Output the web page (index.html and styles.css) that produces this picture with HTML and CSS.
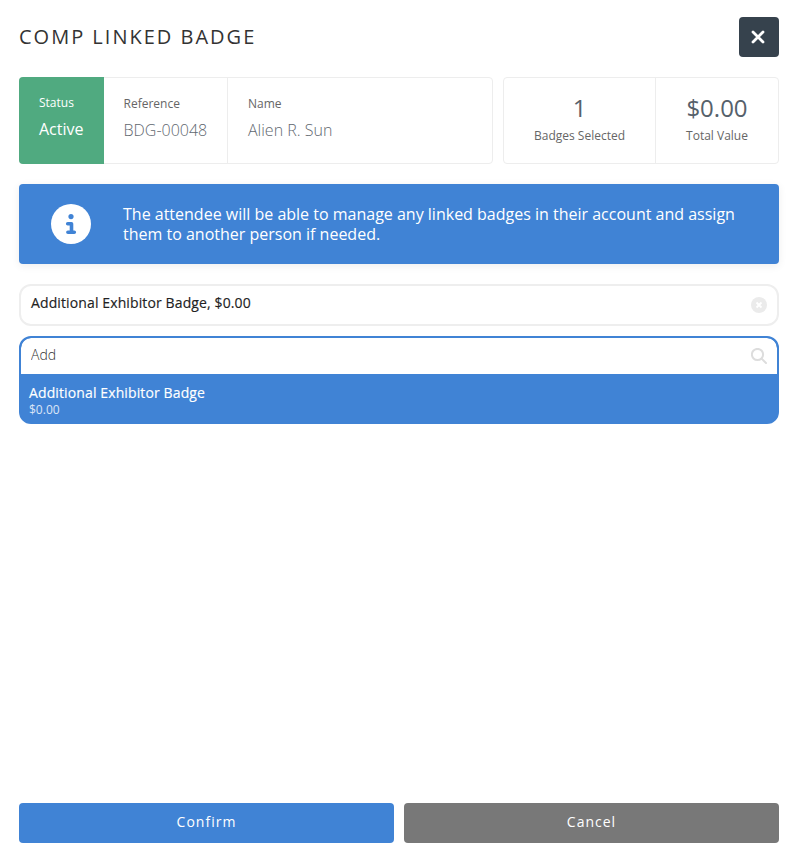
FILE: index.html
```html
<!DOCTYPE html>
<html lang="en">
<head>
    <meta charset="UTF-8">
    <meta name="viewport" content="width=device-width, initial-scale=1.0">
    <title>Comp Linked Badge</title>
    <link rel="stylesheet" href="styles.css">
</head>
<body>
    <div class="modal">
        <header class="modal-header">
            <h1>Comp Linked Badge</h1>
            <button class="close-button" aria-label="Close">
                <svg width="14" height="14" viewBox="0 0 14 14"><path d="M2 2L12 12M12 2L2 12"/></svg>
            </button>
        </header>

        <div class="summary">
            <div class="card details">
                <div class="cell status">
                    <span class="label">Status</span>
                    <span class="value">Active</span>
                </div>
                <div class="cell reference">
                    <span class="label">Reference</span>
                    <span class="value">BDG-00048</span>
                </div>
                <div class="cell name">
                    <span class="label">Name</span>
                    <span class="value">Alien R. Sun</span>
                </div>
            </div>
            <div class="card totals">
                <div class="total selected">
                    <span class="number">1</span>
                    <span class="label">Badges Selected</span>
                </div>
                <div class="total">
                    <span class="number">$0.00</span>
                    <span class="label">Total Value</span>
                </div>
            </div>
        </div>

        <div class="notice">
            <svg class="notice-icon" width="40" height="40" viewBox="0 0 40 40">
                <circle class="disc" cx="20" cy="20" r="20"/>
                <circle class="dot" cx="20" cy="12.6" r="2.6"/>
                <path d="M16.7 19.7H20.5V28.3M16.9 28.3H23.3"/>
            </svg>
            <p>The attendee will be able to manage any linked badges in their account and assign them to another person if needed.</p>
        </div>

        <div class="selected-badge">
            <span>Additional Exhibitor Badge, $0.00</span>
            <button class="remove-button" aria-label="Remove">
                <svg width="16" height="16" viewBox="0 0 16 16"><circle cx="8" cy="8" r="8"/><path d="M5.5 5.5L10.5 10.5M10.5 5.5L5.5 10.5"/></svg>
            </button>
        </div>

        <div class="search">
            <div class="search-field">
                <input type="text" value="Add" aria-label="Search badges">
                <svg width="16" height="16" viewBox="0 0 16 16"><circle cx="6.5" cy="6.5" r="5.6"/><path d="M10.6 10.6L15 15"/></svg>
            </div>
            <div class="search-option">
                <span class="option-name">Additional Exhibitor Badge</span>
                <span class="option-price">$0.00</span>
            </div>
        </div>

        <footer class="actions">
            <button class="confirm-button">Confirm</button>
            <button class="cancel-button">Cancel</button>
        </footer>
    </div>
</body>
</html>
```
FILE: styles.css
```css
* {
    box-sizing: border-box;
}
body {
    margin: 0;
    font-family: "Open Sans", sans-serif;
    background-color: white;
    color: #333;
}
button {
    font-family: inherit;
    border: none;
    padding: 0;
    cursor: pointer;
}
svg {
    display: block;
}
.modal {
    display: flex;
    flex-direction: column;
    min-height: 862px;
    padding: 17px 15px 19px 19px;
}
.modal-header {
    display: flex;
    justify-content: space-between;
    height: 40px;
    margin-bottom: 20px;
}
h1 {
    margin: 0;
    font-size: 20px;
    font-weight: 400;
    line-height: 40px;
    letter-spacing: 2px;
    text-transform: uppercase;
}
.close-button {
    display: flex;
    align-items: center;
    justify-content: center;
    width: 40px;
    height: 40px;
    padding-right: 2px;
    background-color: #36424d;
    border-radius: 4px;
}
.close-button path {
    stroke: white;
    stroke-width: 2.8;
    stroke-linecap: round;
}
.summary {
    display: flex;
    gap: 10px;
    height: 87px;
    margin-bottom: 20px;
}
.card {
    display: flex;
    border: 1px solid #ededed;
    border-radius: 4px;
}
.details {
    flex: 1;
}
.totals {
    width: 276px;
}
.cell {
    padding-top: 17px;
}
.label {
    display: block;
    font-size: 12px;
    line-height: 18px;
    color: #666;
}
.value {
    display: block;
    margin-top: 5px;
    font-size: 16px;
    font-weight: 300;
    line-height: 24px;
    color: #5f6870;
}
.status {
    width: 85px;
    margin: -1px 0 -1px -1px;
    padding: 17px 0 0 20px;
    background-color: #50aa80;
    border-radius: 4px 0 0 4px;
}
.status .label,
.status .value {
    color: white;
}
.status .value {
    font-weight: 400;
}
.reference {
    width: 124px;
    padding-left: 19.5px;
    border-right: 1px solid #ededed;
}
.name {
    padding-left: 20px;
}
.total {
    flex: 1;
    padding-top: 13px;
    text-align: center;
}
.selected {
    flex: none;
    width: 152px;
    border-right: 1px solid #ededed;
}
.number {
    display: block;
    margin-bottom: 2px;
    font-size: 24px;
    line-height: 34px;
    color: #56616b;
}
.notice {
    display: flex;
    align-items: center;
    height: 80px;
    margin-bottom: 20px;
    padding: 0 32px;
    background-color: #4083d5;
    border-radius: 4px;
    box-shadow: 0 2px 8px rgba(0,0,0,0.07);
    color: white;
}
.notice-icon {
    flex: none;
    margin-right: 32px;
}
.notice-icon .disc {
    fill: white;
}
.notice-icon .dot {
    fill: #4083d5;
}
.notice-icon path {
    fill: none;
    stroke: #4083d5;
    stroke-width: 3.6;
    stroke-linecap: round;
    stroke-linejoin: round;
}
.notice p {
    margin: 0;
    font-size: 16px;
    line-height: 20px;
}
.selected-badge {
    display: flex;
    justify-content: space-between;
    height: 42px;
    margin-bottom: 10px;
    padding: 0 10px;
    border: 2px solid #eee;
    border-radius: 12px;
    font-size: 14px;
    line-height: 34px;
    letter-spacing: 0.12px;
    -webkit-text-stroke: 0.15px;
    color: #222;
}
.remove-button {
    align-self: center;
    background: none;
}
.remove-button circle {
    fill: #ebebeb;
}
.remove-button path {
    stroke: white;
    stroke-width: 1.8;
}
.search {
    height: 88px;
    border: 2px solid #4083d5;
    border-radius: 12px;
    background-color: #4083d5;
    overflow: hidden;
}
.search-field {
    display: flex;
    align-items: center;
    justify-content: space-between;
    height: 36px;
    padding: 0 10px;
    background-color: white;
    border-radius: 10px 10px 0 0;
}
.search-field input {
    flex: 1;
    height: 34px;
    padding: 0 0 3px;
    border: none;
    outline: none;
    font-family: inherit;
    font-size: 14px;
    font-weight: 300;
    color: #333;
}
.search-field svg {
    fill: none;
    stroke: #ddd;
    stroke-width: 2;
    stroke-linecap: round;
}
.search-option {
    padding: 9px 8px;
    color: white;
}
.option-name {
    display: block;
    font-size: 14px;
    line-height: 20px;
    letter-spacing: 0.12px;
    -webkit-text-stroke: 0.15px;
}
.option-price {
    display: block;
    font-size: 12px;
    line-height: 14px;
    opacity: 0.8;
}
.actions {
    display: flex;
    gap: 10px;
    margin-top: auto;
}
.actions button {
    flex: 1;
    height: 40px;
    padding-bottom: 3px;
    border-radius: 4px;
    font-size: 14px;
    letter-spacing: 1px;
    color: white;
}
.confirm-button {
    background-color: #4083d5;
}
.cancel-button {
    background-color: #787878;
}
```
